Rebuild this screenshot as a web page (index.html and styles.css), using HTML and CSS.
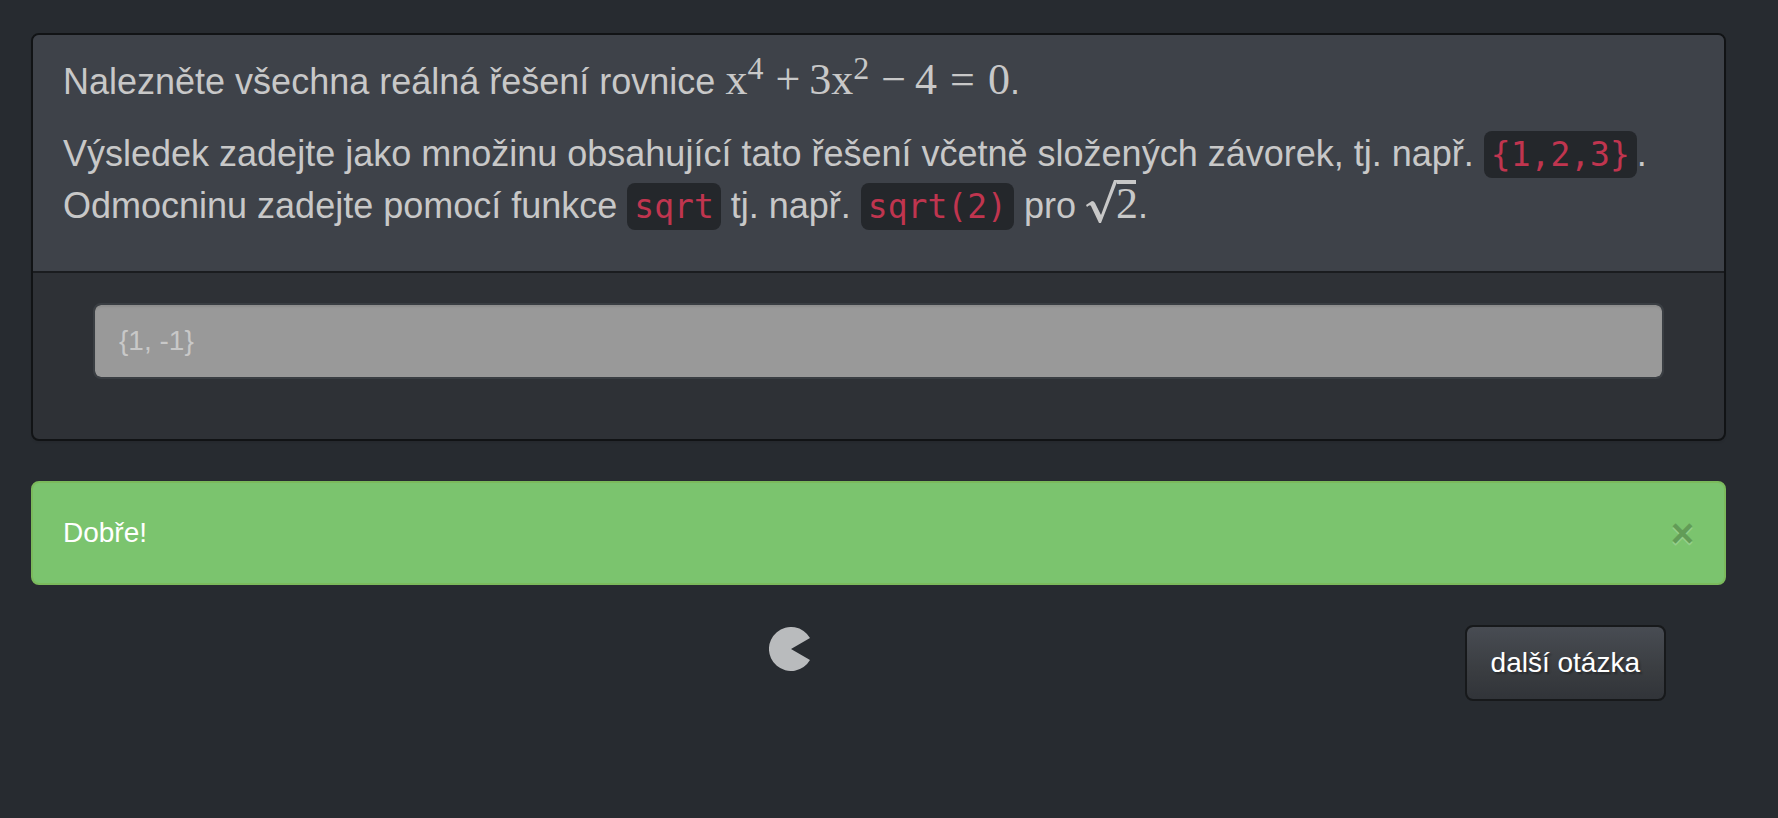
FILE: index.html
```html
<!DOCTYPE html>
<html lang="cs">
<head>
<meta charset="utf-8">
<title>Kvadratické rovnice</title>
<link rel="stylesheet" href="styles.css">
</head>
<body>
<main class="page">
  <section class="panel">
    <div class="panel-heading" id="question">
      <p>Nalezněte všechna reálná řešení rovnice <span class="math">x<sup>4</sup><span class="op">+</span>3x<sup>2</sup><span class="op">−</span>4<span class="rel">=</span>0</span>.</p>
      <p>Výsledek zadejte jako množinu obsahující tato řešení včetně složených závorek, tj. např. <code>{1,2,3}</code>. Odmocninu zadejte pomocí funkce <code>sqrt</code> tj. např. <code>sqrt(2)</code> pro <span class="math root"><svg class="radical" viewBox="0 0 52 43" aria-hidden="true"><path d="M0 25 L6 21 Q8 21 9 23 L15 35 L28 0 H50 V4 H31 V2 L15 43 H13 L5 26 Q4 24 1 27 Z"/></svg>2</span>.</p>
    </div>
    <div class="panel-body">
      <input class="answer" type="text" value="{1, -1}" aria-labelledby="question" disabled>
    </div>
  </section>
  <div class="alert" role="alert">
    <span>Dobře!</span>
    <button class="close" type="button" aria-label="Zavřít">×</button>
  </div>
  <div class="actions">
    <div class="loader">
      <svg class="pacman" viewBox="0 0 44 44" aria-hidden="true"><path d="M22 22 L41 11 A22 22 0 1 0 41 33 Z"/></svg>
    </div>
    <button class="next" type="button">další otázka</button>
  </div>
</main>
</body>
</html>
```
FILE: styles.css
```css
* { box-sizing: border-box; }
body {
  margin: 0;
  background: #272b30;
  color: #c8c8c8;
  font: 28px/40px "Liberation Sans", Arial, sans-serif;
}
.page { padding: 33px 52px 33px 31px; }
.panel {
  border: 2px solid #111315;
  border-radius: 8px;
  background: #2e3136;
  box-shadow: 0 2px 2px rgba(0, 0, 0, 0.05);
}
.panel-heading {
  padding: 21px 30px 19px;
  border-bottom: 2px solid #1a1c1f;
  border-radius: 6px 6px 0 0;
  background: #3e4249;
  font-size: 36px;
  line-height: 52px;
}
.panel-heading p { margin: 0 0 20px; }
code {
  padding: 4px 7px;
  border-radius: 8px;
  background: #24272b;
  color: #c0354f;
  font: 33px/36px "DejaVu Sans Mono", monospace;
}
.math {
  font: 44px/36px "Liberation Serif", "Times New Roman", serif;
  white-space: nowrap;
}
.math sup {
  font-size: 32px;
  line-height: 0;
  vertical-align: 15px;
}
.op { margin: 0 9px 0 12px; }
.rel { margin: 0 13px; }
.root {
  display: inline-block;
  position: relative;
  padding-left: 30px;
}
/* The radical sign lies over its radicand. */
.radical {
  position: absolute;
  top: -6px;
  left: 0;
  width: 52px;
  height: 43px;
  fill: currentColor;
}
.panel-body { padding: 30px 60px 60px; }
.answer {
  display: block;
  width: 100%;
  height: 76px;
  padding: 16px 24px;
  border: 2px solid #3a3e43;
  border-radius: 8px;
  background: #999;
  background-clip: padding-box;
  box-shadow: inset 0 2px 2px rgba(0, 0, 0, 0.08);
  color: #c8c8c8;
  font: inherit;
}
.alert {
  display: flex;
  justify-content: space-between;
  align-items: center;
  margin: 40px 0;
  padding: 30px;
  border: 2px solid #7bba5c;
  border-radius: 8px;
  background: #7bc46e;
  color: #fff;
}
.close {
  padding: 0;
  border: 0;
  background: none;
  color: #000;
  font: bold 40px/40px "Liberation Sans", Arial, sans-serif;
  text-shadow: 0 2px 0 #fff;
  opacity: 0.2;
}
.actions {
  display: flex;
  align-items: flex-start;
  padding: 0 60px;
}
.loader {
  display: flex;
  flex: 1;
  justify-content: center;
  padding: 2px 0 0 26px;
}
.pacman {
  width: 44px;
  height: 44px;
  fill: #b9bbbd;
}
.next {
  height: 76px;
  padding: 0 24px;
  border: 2px solid #17191b;
  border-radius: 8px;
  background: linear-gradient(#484c53, #3a3d41 60%, #313439) padding-box;
  color: #fff;
  font: inherit;
  text-shadow: 2px 2px 2px rgba(0, 0, 0, 0.3);
}
```
